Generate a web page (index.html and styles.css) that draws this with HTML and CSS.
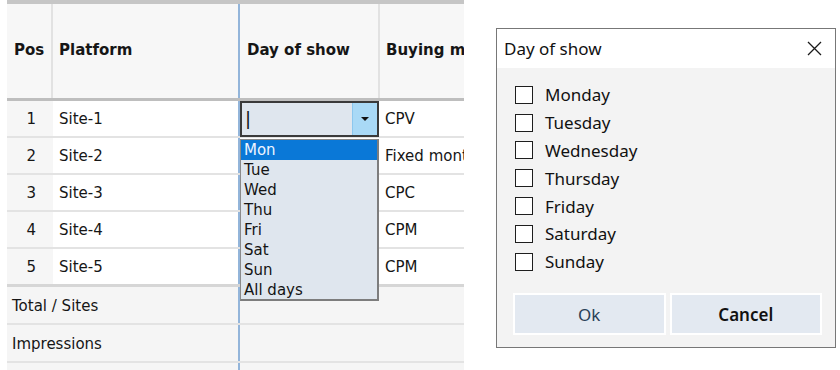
FILE: index.html
```html
<!DOCTYPE html>
<html>
<head>
<meta charset="utf-8">
<link rel="stylesheet" href="styles.css">
</head>
<body>
<div class="page">
  <div class="sheet">
    <div class="row head">
      <div class="c pos">Pos</div>
      <div class="c plat">Platform</div>
      <div class="c day">Day of show</div>
      <div class="c buy">Buying model</div>
    </div>
    <div class="row body">
      <div class="c pos">1</div>
      <div class="c plat">Site-1</div>
      <div class="c day edit">
        <div class="combo">
          <span class="caret">|</span>
          <span class="arrow"><span class="tri"></span></span>
        </div>
      </div>
      <div class="c buy">CPV</div>
    </div>
    <div class="row body">
      <div class="c pos">2</div>
      <div class="c plat">Site-2</div>
      <div class="c day"></div>
      <div class="c buy">Fixed monthly</div>
    </div>
    <div class="row body">
      <div class="c pos">3</div>
      <div class="c plat">Site-3</div>
      <div class="c day"></div>
      <div class="c buy">CPC</div>
    </div>
    <div class="row body">
      <div class="c pos">4</div>
      <div class="c plat">Site-4</div>
      <div class="c day"></div>
      <div class="c buy">CPM</div>
    </div>
    <div class="row body last">
      <div class="c pos">5</div>
      <div class="c plat">Site-5</div>
      <div class="c day"></div>
      <div class="c buy">CPM</div>
    </div>
    <div class="row foot">
      <div class="c label">Total / Sites</div>
      <div class="c day"></div>
      <div class="c buy"></div>
    </div>
    <div class="row foot">
      <div class="c label">Impressions</div>
      <div class="c day"></div>
      <div class="c buy"></div>
    </div>
    <div class="row foot tail">
      <div class="c label"></div>
      <div class="c day"></div>
      <div class="c buy"></div>
    </div>
    <ul class="dropdown">
      <li class="sel">Mon</li>
      <li>Tue</li>
      <li>Wed</li>
      <li>Thu</li>
      <li>Fri</li>
      <li>Sat</li>
      <li>Sun</li>
      <li>All days</li>
    </ul>
  </div>

  <div class="dialog">
    <div class="title">
      <span>Day of show</span>
      <svg class="close" width="15" height="15" viewBox="0 0 15 15"><path d="M1 1 L14 14 M14 1 L1 14" stroke="#1a1a1a" stroke-width="1.3" fill="none"/></svg>
    </div>
    <div class="checks">
      <label class="chk"><span class="box"></span>Monday</label>
      <label class="chk"><span class="box"></span>Tuesday</label>
      <label class="chk"><span class="box"></span>Wednesday</label>
      <label class="chk"><span class="box"></span>Thursday</label>
      <label class="chk"><span class="box"></span>Friday</label>
      <label class="chk"><span class="box"></span>Saturday</label>
      <label class="chk"><span class="box"></span>Sunday</label>
    </div>
    <div class="buttons">
      <div class="btn ok">Ok</div>
      <div class="btn cancel">Cancel</div>
    </div>
  </div>
</div>
</body>
</html>
```
FILE: styles.css
```css
html, body {
  margin: 0;
  padding: 0;
  background: #ffffff;
}
body {
  font-family: "DejaVu Sans", sans-serif;
  color: #161616;
  height: 370px;
  overflow: hidden;
}
.page {
  display: flex;
  align-items: flex-start;
  height: 370px;
  overflow: hidden;
}
.sheet {
  width: 457px;
  margin-left: 7px;
  position: relative;
  overflow: hidden;
  font-size: 15px;
}
.row {
  display: grid;
  grid-template-columns: 46px 185px 142px 84px;
  box-sizing: border-box;
}
.c {
  display: flex;
  align-items: center;
  white-space: nowrap;
  overflow: hidden;
  box-sizing: border-box;
  min-width: 0;
}
.head {
  height: 101px;
  border-top: 4px solid #c6c6c6;
  border-bottom: 3px solid #bebebe;
  background: #f7f7f7;
  font-weight: bold;
}
.head .c {
  padding-bottom: 3px;
}
.head .pos {
  padding-left: 7px;
  border-right: 2px solid #e2e2e2;
}
.head .plat {
  padding-left: 6px;
}
.day {
  border-left: 2px solid #93b5da;
}
.head .day {
  padding-left: 7px;
  border-right: 2px solid #e2e2e2;
}
.head .buy {
  padding-left: 6px;
}
.body {
  height: 37px;
  border-bottom: 2px solid #e3e3e3;
  background: #ffffff;
}
.body.last {
  height: 38px;
  border-bottom: 3px solid #d6d6d6;
}
.body .pos {
  background: #f6f6f6;
  justify-content: flex-end;
  padding-right: 17px;
}
.body .plat {
  padding-left: 6px;
}
.body .buy {
  padding-left: 5px;
}
.body .edit {
  align-items: stretch;
  overflow: visible;
}
.combo {
  flex: 1;
  display: flex;
  align-items: center;
  justify-content: space-between;
  background: #dfe6ee;
  border: 2px solid #3a3a3a;
  box-sizing: border-box;
  margin-right: 1px;
  margin-bottom: -1px;
}
.caret {
  padding-left: 3px;
  font-weight: normal;
  color: #111;
  font-size: 18px;
  line-height: 1;
}
.arrow {
  align-self: stretch;
  width: 24px;
  background: #a9d9f6;
  border-left: 1px solid #8cc7ee;
  display: flex;
  align-items: center;
  justify-content: center;
}
.tri {
  width: 0;
  height: 0;
  border-left: 4px solid transparent;
  border-right: 4px solid transparent;
  border-top: 4px solid #111;
}
.foot {
  height: 38px;
  border-bottom: 2px solid #e3e3e3;
  background: #f5f5f5;
}
.foot .label {
  grid-column: 1 / 3;
  padding-left: 5px;
  padding-top: 2px;
}
.dropdown {
  position: absolute;
  left: 233px;
  top: 139px;
  width: 139px;
  height: 162px;
  margin: 0;
  padding: 0;
  list-style: none;
  background: #dfe6ee;
  border: 1px solid #8a8a8a;
  border-right: 2px solid #7d7d7d;
  border-bottom: 2px solid #7d7d7d;
  box-sizing: border-box;
}
.dropdown li {
  height: 20px;
  line-height: 21px;
  padding-left: 3px;
  font-size: 15px;
  color: #141414;
}
.dropdown li.sel {
  background: #0a78d7;
  color: #eef4ff;
}
.dialog {
  margin-left: 32px;
  margin-top: 28px;
  width: 340px;
  height: 320px;
  box-sizing: border-box;
  border: 1px solid #777777;
  background: #f3f3f3;
  display: flex;
  flex-direction: column;
  font-family: "Noto Sans", sans-serif;
  font-size: 17px;
  color: #111;
}
.title {
  height: 39px;
  background: #ffffff;
  display: flex;
  align-items: center;
  justify-content: space-between;
  padding: 0 13px 0 7px;
  flex: none;
}
.checks {
  display: flex;
  flex-direction: column;
  padding: 13px 0 0 18px;
}
.chk {
  height: 27.8px;
  display: flex;
  align-items: center;
  gap: 12px;
}
.box {
  width: 18px;
  height: 18px;
  box-sizing: border-box;
  border: 1px solid #1e1e1e;
  background: #ffffff;
}
.buttons {
  margin-top: auto;
  display: flex;
  gap: 4px;
  padding: 0 13px 12px 16px;
}
.btn {
  flex: 1;
  height: 42px;
  box-sizing: border-box;
  border: 2px solid #ffffff;
  background: #e3e9f1;
  display: flex;
  align-items: center;
  justify-content: center;
}
.btn.ok {
  color: #2a4058;
}
.btn.cancel {
  color: #111;
  font-weight: 600;
}
```
